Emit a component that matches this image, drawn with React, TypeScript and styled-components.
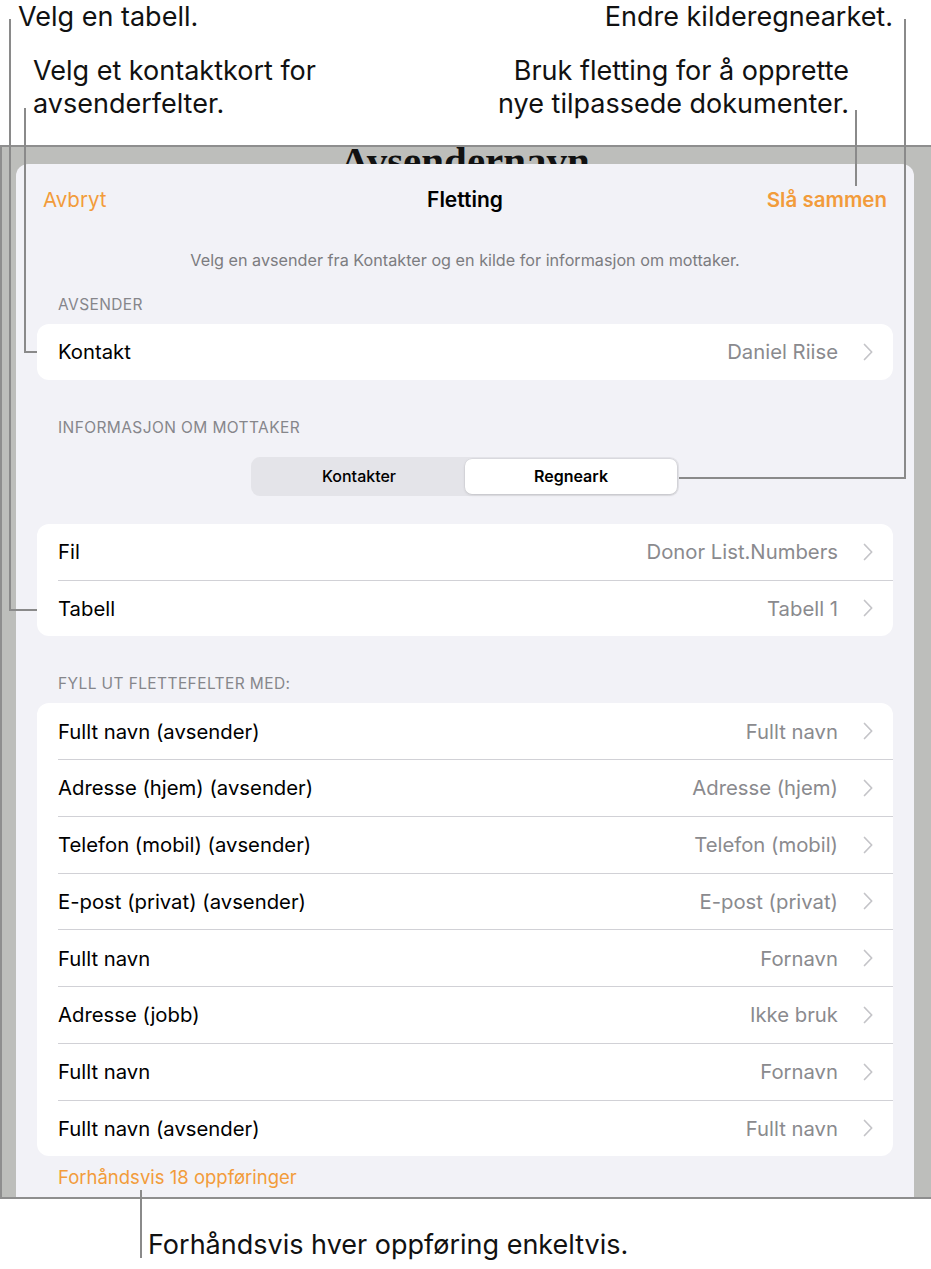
import React from "react"
import styled, { createGlobalStyle } from "styled-components"

const GlobalStyle = createGlobalStyle`
  html, body {
    margin: 0;
    padding: 0;
    background: #ffffff;
  }
  body {
    font-family: Inter, "Liberation Sans", sans-serif;
    -webkit-font-smoothing: antialiased;
  }
`

const ORANGE = "#f29c3b"

interface Row {
  label: string
  value: string
}

const senderRows: Row[] = [{ label: "Kontakt", value: "Daniel Riise" }]

const sourceRows: Row[] = [
  { label: "Fil", value: "Donor List.Numbers" },
  { label: "Tabell", value: "Tabell 1" },
]

const fieldRows: Row[] = [
  { label: "Fullt navn (avsender)", value: "Fullt navn" },
  { label: "Adresse (hjem) (avsender)", value: "Adresse (hjem)" },
  { label: "Telefon (mobil) (avsender)", value: "Telefon (mobil)" },
  { label: "E-post (privat) (avsender)", value: "E-post (privat)" },
  { label: "Fullt navn", value: "Fornavn" },
  { label: "Adresse (jobb)", value: "Ikke bruk" },
  { label: "Fullt navn", value: "Fornavn" },
  { label: "Fullt navn (avsender)", value: "Fullt navn" },
]

const Chevron = () => (
  <svg width="10" height="18" viewBox="0 0 10 18" fill="none">
    <path
      d="M1.5 1.5l7.2 7.5-7.2 7.5"
      stroke="#c4c4c8"
      strokeWidth="1.7"
      strokeLinecap="round"
      strokeLinejoin="round"
    />
  </svg>
)

const ListCard = ({ rows }: { rows: Row[] }) => (
  <Card>
    {rows.map((row, i) => (
      <React.Fragment key={i}>
        {i > 0 && <Separator />}
        <RowItem>
          <RowLabel>{row.label}</RowLabel>
          <RowValue>{row.value}</RowValue>
          <Chevron />
        </RowItem>
      </React.Fragment>
    ))}
  </Card>
)

// leader lines of the callouts, drawn over the screenshot
const Leaders = () => (
  <LeaderLayer width="931" height="1269" viewBox="0 0 931 1269">
    <g stroke="#8a8a8a" strokeWidth="2" fill="none">
      <path d="M10 19V610H37" />
      <path d="M25 108V352H37" />
      <path d="M905 19V478H679" />
      <path d="M856 110V186" />
      <path d="M141 1190V1258" />
    </g>
  </LeaderLayer>
)

export default function App() {
  return (
    <>
      <GlobalStyle />
      <Page>
        <TopCallouts>
          <CalloutColumn>
            <Callout $indent={18}>Velg en tabell.</Callout>
            <Callout $indent={33} $top={21}>
              Velg et kontaktkort for
              <br />
              avsenderfelter.
            </Callout>
          </CalloutColumn>
          <CalloutColumn $right>
            <Callout $indent={38}>Endre kilderegnearket.</Callout>
            <Callout $indent={82} $top={21}>
              Bruk fletting for å opprette
              <br />
              nye tilpassede dokumenter.
            </Callout>
          </CalloutColumn>
        </TopCallouts>

        <Screen>
          <DocTitle>Avsendernavn</DocTitle>
          <Sheet>
            <NavBar>
              <NavButton>Avbryt</NavButton>
              <NavTitle>Fletting</NavTitle>
              <NavButton $strong>Slå sammen</NavButton>
            </NavBar>

            <Description>
              Velg en avsender fra Kontakter og en kilde for informasjon om
              mottaker.
            </Description>

            <SectionHeader $top={26}>AVSENDER</SectionHeader>
            <ListCard rows={senderRows} />

            <SectionHeader $top={39}>INFORMASJON OM MOTTAKER</SectionHeader>
            <Segmented>
              <Segment>Kontakter</Segment>
              <Segment $active>Regneark</Segment>
            </Segmented>

            <Spacer $h={28} />
            <ListCard rows={sourceRows} />

            <SectionHeader $top={39}>FYLL UT FLETTEFELTER MED:</SectionHeader>
            <ListCard rows={fieldRows} />

            <PreviewLink>Forhåndsvis 18 oppføringer</PreviewLink>
          </Sheet>
        </Screen>

        <BottomCallout>Forhåndsvis hver oppføring enkeltvis.</BottomCallout>
        <Leaders />
      </Page>
    </>
  )
}

const Page = styled.div`
  position: relative;
  width: 931px;
  height: 1269px;
  overflow: hidden;
  display: flex;
  flex-direction: column;
  background: #ffffff;
`

const TopCallouts = styled.div`
  height: 145px;
  display: flex;
  justify-content: space-between;
`

const CalloutColumn = styled.div<{ $right?: boolean }>`
  display: flex;
  flex-direction: column;
  align-items: ${(p) => (p.$right ? "flex-end" : "flex-start")};
  text-align: ${(p) => (p.$right ? "right" : "left")};
`

const Callout = styled.div<{ $indent: number; $top?: number }>`
  margin: ${(p) => p.$top ?? 0}px ${(p) => p.$indent}px 0;
  font-size: 27px;
  line-height: 33px;
  color: #111111;
`

const Screen = styled.div`
  height: 1050px;
  display: flex;
  flex-direction: column;
  background: #bdbebb;
  border-top: 2px solid #8e8e8e;
  border-bottom: 2px solid #8e8e8e;
  border-left: 2px solid #8e8e8e;
  padding: 0 17px 0 14px;
`

const DocTitle = styled.div`
  margin-top: -6px;
  height: 23px;
  overflow: hidden;
  text-align: center;
  font-family: "Liberation Serif", serif;
  font-weight: 700;
  font-size: 41px;
  line-height: 40px;
  color: #111111;
`

const Sheet = styled.div`
  flex: 1;
  display: flex;
  flex-direction: column;
  padding: 0 21px;
  background: #f2f2f7;
  border-radius: 12px 12px 0 0;
`

const NavBar = styled.div`
  height: 70px;
  display: grid;
  grid-template-columns: 1fr auto 1fr;
  align-items: center;
  padding: 0 6px;
`

const NavButton = styled.div<{ $strong?: boolean }>`
  font-size: 20.5px;
  font-weight: ${(p) => (p.$strong ? 600 : 400)};
  color: ${ORANGE};
  &:last-child {
    text-align: right;
  }
`

const NavTitle = styled.div`
  font-size: 21px;
  font-weight: 600;
  color: #000000;
`

const Description = styled.div`
  margin-top: 16px;
  text-align: center;
  font-size: 16.2px;
  line-height: 20px;
  color: #7c7c80;
`

const SectionHeader = styled.div<{ $top: number }>`
  margin-top: ${(p) => p.$top}px;
  margin-bottom: 10px;
  padding-left: 21px;
  font-size: 15.5px;
  letter-spacing: 0.4px;
  line-height: 18px;
  color: #86868b;
`

const Spacer = styled.div<{ $h: number }>`
  height: ${(p) => p.$h}px;
`

const Card = styled.div`
  display: flex;
  flex-direction: column;
  background: #ffffff;
  border-radius: 12px;
  overflow: hidden;
`

const RowItem = styled.div`
  height: 55.75px;
  display: flex;
  align-items: center;
  padding: 0 20px 0 21px;
`

const Separator = styled.div`
  height: 1px;
  margin-left: 21px;
  background: #d1d1d6;
`

const RowLabel = styled.div`
  flex: 1;
  font-size: 20.3px;
  color: #000000;
`

const RowValue = styled.div`
  margin-right: 25px;
  font-size: 20.3px;
  color: #8a8a8e;
`

const Segmented = styled.div`
  align-self: center;
  width: 428px;
  height: 39px;
  box-sizing: border-box;
  margin-top: 10px;
  padding: 2px;
  display: grid;
  grid-template-columns: 1fr 1fr;
  background: #e4e4e9;
  border-radius: 9px;
`

const Segment = styled.div<{ $active?: boolean }>`
  display: flex;
  align-items: center;
  justify-content: center;
  font-size: 16px;
  font-weight: ${(p) => (p.$active ? 600 : 500)};
  color: #000000;
  border-radius: 7px;
  background: ${(p) => (p.$active ? "#ffffff" : "transparent")};
  box-shadow: ${(p) =>
    p.$active ? "0 1px 3px rgba(0,0,0,0.12), 0 0 0 0.5px rgba(0,0,0,0.06)" : "none"};
`

const PreviewLink = styled.div`
  margin-top: 10px;
  padding-left: 21px;
  font-size: 18.5px;
  line-height: 22px;
  color: ${ORANGE};
`

const BottomCallout = styled.div`
  margin: 29px 0 0 148px;
  font-size: 27px;
  line-height: 33px;
  color: #111111;
`

const LeaderLayer = styled.svg`
  position: absolute;
  left: 0;
  top: 0;
  pointer-events: none;
`
